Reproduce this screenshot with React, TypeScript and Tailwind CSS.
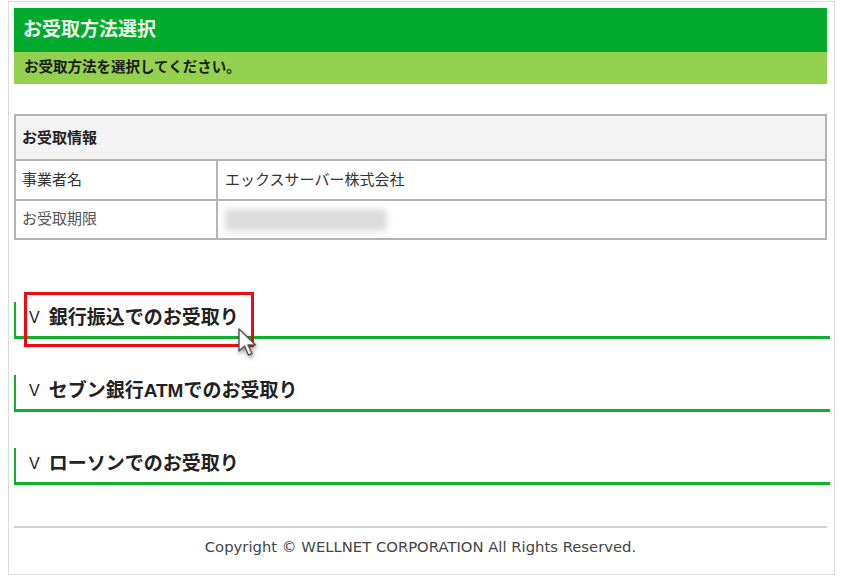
const cjk = 'font-["Liberation_Sans","Noto_Sans_CJK_JP",sans-serif]';

const methods = ['銀行振込でのお受取り', 'セブン銀行ATMでのお受取り', 'ローソンでのお受取り'];

function Cursor() {
    return (
        <svg
            className="absolute left-[237px] top-[327px] drop-shadow-[1px_2px_2px_rgba(0,0,0,0.45)]"
            width="22"
            height="32"
            viewBox="0 0 22 32"
        >
            <path
                d="M2 2 L2 24 L7.5 19 L11.5 28 L15 26.5 L11 18 L18.5 18 Z"
                fill="#ffffff"
                stroke="#555555"
                strokeWidth="1.4"
                strokeLinejoin="round"
            />
        </svg>
    );
}

export default function App() {
    return (
        <div className={`relative h-[580px] w-[843px] overflow-hidden bg-white ${cjk}`}>
            <div className="ml-2 mt-px h-[574px] w-[827px] border border-[#dcdcdc] pl-[5px] pt-[6px]">
                <div className="w-[813px]">
                    <h1 className="flex h-[44px] items-center bg-[#00aa2c] pl-[9px] text-[19px] font-bold text-[#eef8ee]">
                        お受取方法選択
                    </h1>
                    <p className="flex h-[32px] items-center bg-[#93d14f] pl-[10px] text-[14.5px] font-bold text-[#1a1a1a]">
                        お受取方法を選択してください。
                    </p>
                </div>

                <table className="mt-[30px] w-[813px] table-fixed border-collapse border-2 border-[#b4b4b4] text-[15px] text-[#333]">
                    <colgroup>
                        <col className="w-[202px]" />
                        <col />
                    </colgroup>
                    <tbody>
                        <tr className="h-[45px] bg-[#f3f3f3]">
                            <th colSpan={2} className="border-2 border-[#b4b4b4] pl-[6px] pt-px text-left font-bold text-[#222]">
                                お受取情報
                            </th>
                        </tr>
                        <tr className="h-[40px]">
                            <td className="border-2 border-[#b4b4b4] pl-[6px]">事業者名</td>
                            <td className="border-2 border-[#b4b4b4] pl-[7px]">エックスサーバー株式会社</td>
                        </tr>
                        <tr className="h-[39px]">
                            <td className="border-2 border-[#b4b4b4] pl-[6px] text-[#555]">お受取期限</td>
                            <td className="border-2 border-[#b4b4b4] pl-[7px]">
                                <div className="h-[22px] w-[162px] bg-[#dcdcdc] blur-[3px]" />
                            </td>
                        </tr>
                    </tbody>
                </table>

                <div className="mt-[62px] flex w-[816px] flex-col gap-[36px]">
                    {methods.map((label) => (
                        <div
                            key={label}
                            className="flex h-[37px] items-center gap-[9px] border-b-[3px] border-l-2 border-[#12ae2e] pb-[2px] pl-[13px] text-[19px] font-bold text-[#222]"
                        >
                            <span className="text-[16px] font-normal">V</span>
                            <span>{label}</span>
                        </div>
                    ))}
                </div>

                <div className='mt-[41px] w-[813px] border-t-2 border-[#d0d0d0] pt-[10px] text-center font-["DejaVu_Sans",sans-serif] text-[14.8px] leading-[18px] text-[#444]'>
                    Copyright © WELLNET CORPORATION All Rights Reserved.
                </div>
            </div>

            <div className="absolute left-[24px] top-[292px] h-[55px] w-[230px] border-[3px] border-[#ee0a12]" />
            <Cursor />
        </div>
    );
}
